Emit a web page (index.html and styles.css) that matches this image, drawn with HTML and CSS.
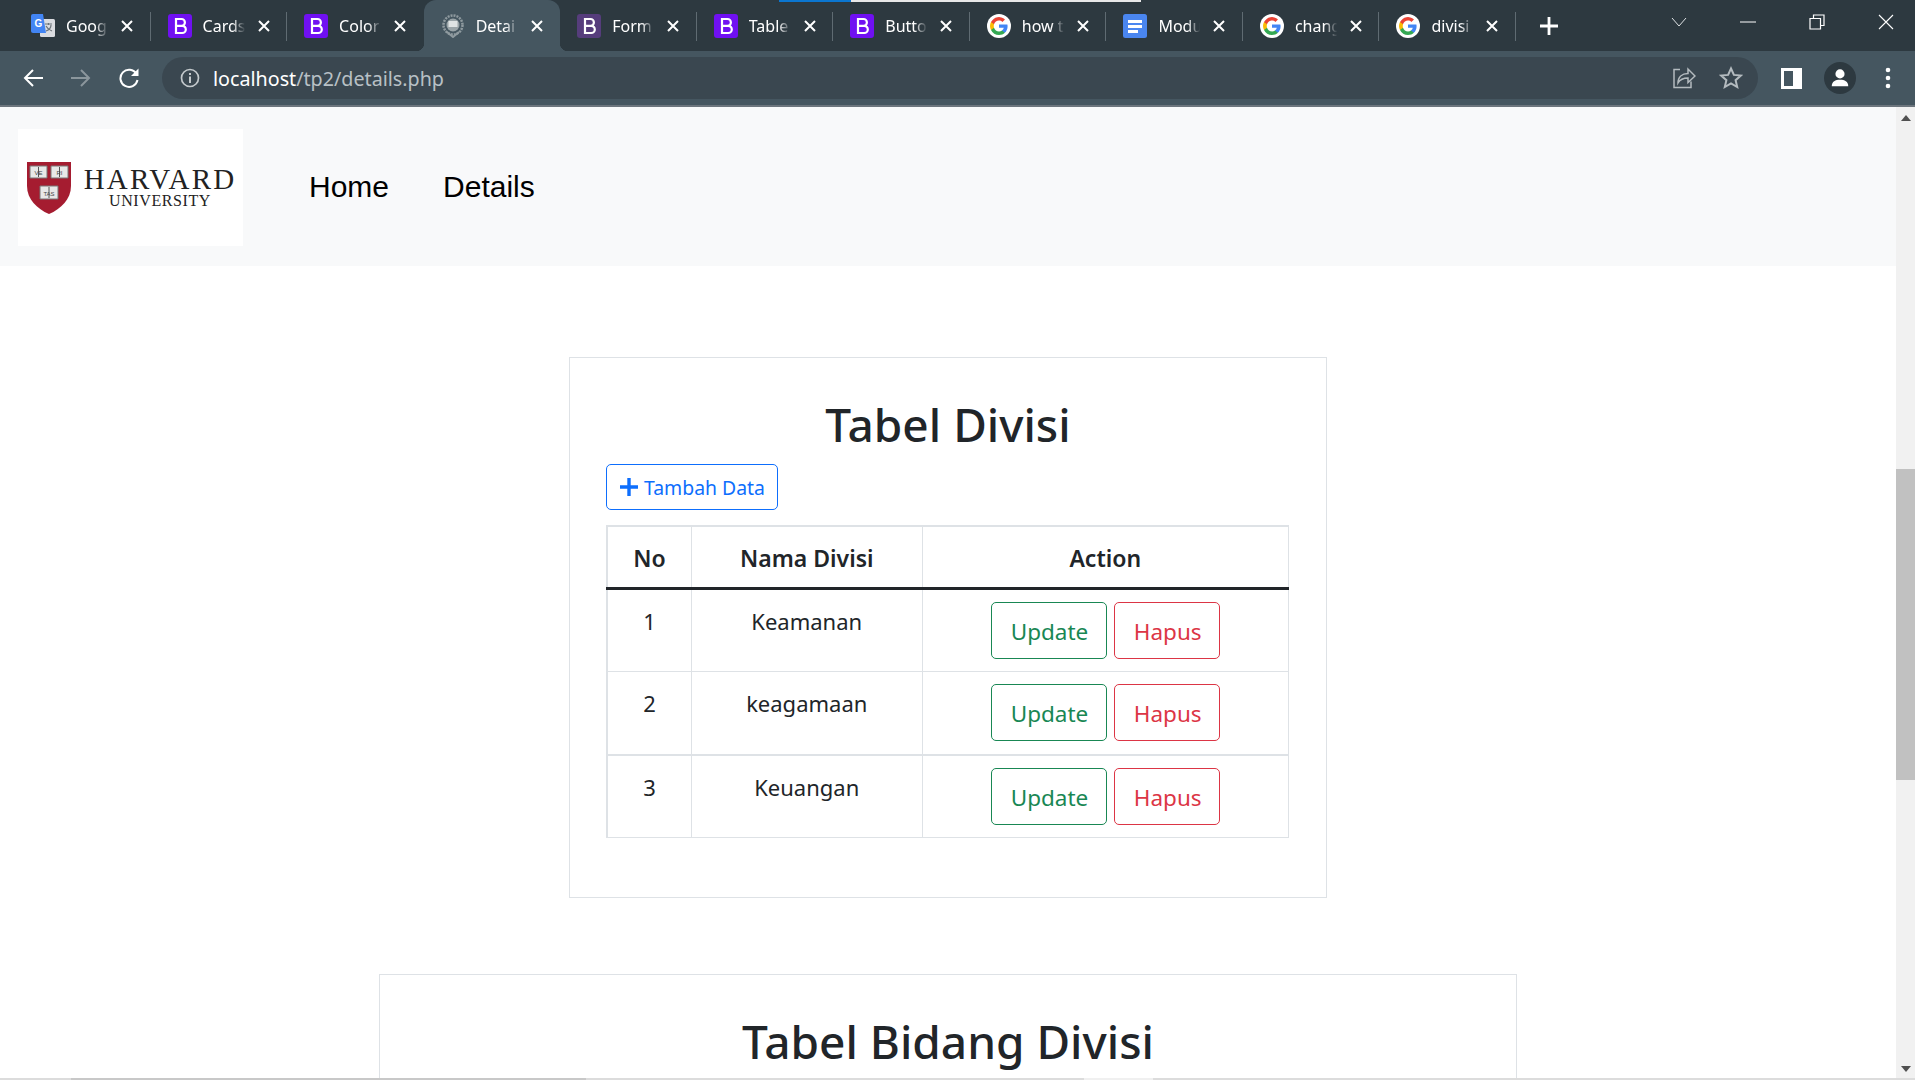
FILE: index.html
```html
<!DOCTYPE html>
<html lang="en">
<head>
    <meta charset="UTF-8">
    <meta name="viewport" content="width=device-width, initial-scale=1.0">
    <title>Details</title>
    <link rel="stylesheet" href="styles.css">
</head>
<body>
    <svg class="defs">
        <defs>
            <symbol id="fav-b" viewBox="0 0 24 24">
                <path fill="none" stroke="#fff" stroke-width="2.2" d="M8 5h5.5a3.4 3.4 0 0 1 0 6.8H8h6.2a3.6 3.6 0 0 1 0 7.2H8z"/>
            </symbol>
            <symbol id="fav-g" viewBox="0 0 24 24">
                <circle cx="12" cy="12" r="12" fill="#fff"/>
                <path fill="#4285f4" d="M20.6 12.2c0-.6-.1-1.200-.2-1.800H12v3.400h4.800a4.100 4.100 0 0 1-1.800 2.700v2.200h2.900c1.700-1.600 2.700-3.900 2.700-6.500z"/>
                <path fill="#34a853" d="M12 21c2.400 0 4.400-.8 5.900-2.200L15 16.500c-.8.500-1.800.9-3 .9-2.300 0-4.300-1.600-5-3.700H4v2.300A9 9 0 0 0 12 21z"/>
                <path fill="#fbbc05" d="M7 13.700a5.400 5.400 0 0 1 0-3.400V8H4a9 9 0 0 0 0 8z"/>
                <path fill="#ea4335" d="M12 6.600c1.300 0 2.500.5 3.400 1.300L18 5.400A9 9 0 0 0 4 8l3 2.300c.7-2.100 2.700-3.700 5-3.700z"/>
            </symbol>
            <symbol id="ic-close" viewBox="0 0 14 14">
                <path fill="none" stroke="#fff" stroke-width="2" d="M2 2l10 10M12 2L2 12"/>
            </symbol>
        </defs>
    </svg>

    <div class="browser">
        <div class="load-bar"><span></span></div>

        <div class="tabstrip">
            <div class="tab">
                <svg class="fav" viewBox="0 0 24 24">
                    <rect x="9" y="5" width="15" height="18" rx="1.500" fill="#dadce0"/>
                    <path d="M14 10h7M17.500 9v2M15 17c3-1 5-3 5-6M15 12c1 2 3 4 6 5" fill="none" stroke="#6b7278" stroke-width="1.200"/>
                    <path d="M2 0h10l3 19H2a2 2 0 0 1-2-2V2a2 2 0 0 1 2-2z" fill="#4285f4"/>
                    <text x="3.500" y="13" class="fav-letter">G</text>
                </svg>
                <span class="tab-title">Goog</span>
                <svg class="tab-close"><use href="#ic-close"/></svg>
            </div>
            <div class="tab">
                <span class="fav fav-boot"><svg><use href="#fav-b"/></svg></span>
                <span class="tab-title">Cards</span>
                <svg class="tab-close"><use href="#ic-close"/></svg>
            </div>
            <div class="tab">
                <span class="fav fav-boot"><svg><use href="#fav-b"/></svg></span>
                <span class="tab-title">Color</span>
                <svg class="tab-close"><use href="#ic-close"/></svg>
            </div>
            <div class="tab tab-active">
                <svg class="fav" viewBox="0 0 24 24">
                    <circle cx="12" cy="11" r="9.500" fill="none" stroke="#8f9a9f" stroke-width="2.500" stroke-dasharray="2 1"/>
                    <circle cx="12" cy="11" r="6.500" fill="#9aa4a8"/>
                    <rect x="7.500" y="7" width="9" height="6" fill="#dfe3e4"/>
                    <path d="M6 18l6 5 6-5" fill="none" stroke="#8f9a9f" stroke-width="2"/>
                </svg>
                <span class="tab-title">Detai</span>
                <svg class="tab-close"><use href="#ic-close"/></svg>
            </div>
            <div class="tab">
                <span class="fav fav-boot fav-boot-old"><svg><use href="#fav-b"/></svg></span>
                <span class="tab-title">Form</span>
                <svg class="tab-close"><use href="#ic-close"/></svg>
            </div>
            <div class="tab">
                <span class="fav fav-boot"><svg><use href="#fav-b"/></svg></span>
                <span class="tab-title">Table</span>
                <svg class="tab-close"><use href="#ic-close"/></svg>
            </div>
            <div class="tab">
                <span class="fav fav-boot"><svg><use href="#fav-b"/></svg></span>
                <span class="tab-title">Butto</span>
                <svg class="tab-close"><use href="#ic-close"/></svg>
            </div>
            <div class="tab">
                <svg class="fav"><use href="#fav-g"/></svg>
                <span class="tab-title">how t</span>
                <svg class="tab-close"><use href="#ic-close"/></svg>
            </div>
            <div class="tab">
                <svg class="fav" viewBox="0 0 24 24">
                    <rect width="24" height="24" rx="2.500" fill="#4a86f0"/>
                    <path d="M5 6h14v3H5zM5 11h14v3H5zM5 16h10v3H5z" fill="#fff"/>
                </svg>
                <span class="tab-title">Modu</span>
                <svg class="tab-close"><use href="#ic-close"/></svg>
            </div>
            <div class="tab">
                <svg class="fav"><use href="#fav-g"/></svg>
                <span class="tab-title">chang</span>
                <svg class="tab-close"><use href="#ic-close"/></svg>
            </div>
            <div class="tab">
                <svg class="fav"><use href="#fav-g"/></svg>
                <span class="tab-title">divisi</span>
                <svg class="tab-close"><use href="#ic-close"/></svg>
            </div>
            <svg class="new-tab" viewBox="0 0 18 18"><path fill="none" stroke="#fff" stroke-width="2.800" d="M9 0v18M0 9h18"/></svg>
            <div class="win-controls">
                <svg viewBox="0 0 16 10" class="win-chevron"><path fill="none" stroke="#dfe3e5" stroke-width="1" d="M1 1l7 8 7-8"/></svg>
                <svg viewBox="0 0 16 16" class="win-min"><path stroke="#fff" stroke-width="1" d="M0 8h16"/></svg>
                <svg viewBox="0 0 16 16" class="win-restore"><path fill="none" stroke="#fff" stroke-width="1.200" d="M1 4.500h10.500V15H1zM4.500 4.500V1H15v10.500h-3.500"/></svg>
                <svg viewBox="0 0 16 16" class="win-close"><path fill="none" stroke="#fff" stroke-width="1.100" d="M1 1l14 14M15 1L1 15"/></svg>
            </div>
        </div>

        <div class="toolbar">
            <svg class="tool-btn" viewBox="0 0 22 22"><path fill="none" stroke="#fff" stroke-width="2" d="M21 11H3M11 3l-8 8 8 8"/></svg>
            <svg class="tool-btn" viewBox="0 0 22 22"><path fill="none" stroke="#8b969c" stroke-width="2" d="M1 11h18M11 3l8 8-8 8"/></svg>
            <svg class="tool-btn" viewBox="0 0 22 22">
                <path fill="none" stroke="#fff" stroke-width="2" d="M18.500 7A8.600 8.600 0 1 0 19.500 13"/>
                <path fill="#fff" d="M20.500 1.500v7.500h-7.500z"/>
            </svg>
            <div class="omnibox">
                <svg class="omni-info" viewBox="0 0 20 20">
                    <circle cx="10" cy="10" r="8.500" fill="none" stroke="#c3c9cc" stroke-width="1.700"/>
                    <path d="M9 5h2v2H9zM9 8.500h2V15H9z" fill="#c3c9cc"/>
                </svg>
                <span class="url"><b>localhost</b>/tp2/details.php</span>
                <svg class="omni-share" viewBox="0 0 24 24">
                    <path fill="none" stroke="#b4bbbf" stroke-width="1.500" d="M8 3.500H2v18h17v-6"/>
                    <path fill="none" stroke="#b4bbbf" stroke-width="1.500" d="M6 17c0-6 4-9.500 10-9.500V3l7 7-7 6.500v-4.500c-5 0-8 1.500-10 5z"/>
                </svg>
                <svg class="omni-star" viewBox="0 0 24 24">
                    <path fill="none" stroke="#b4bbbf" stroke-width="2" d="M12 2.500l2.900 6.400 7 .7-5.300 4.600 1.600 6.800L12 17.400 5.800 21l1.600-6.800L2.100 9.600l7-.7z"/>
                </svg>
            </div>
            <svg class="side-panel" viewBox="0 0 21 21">
                <path fill="#fff" d="M0 0h21v21H0z"/>
                <path fill="#455660" d="M3 3h9v15H3z"/>
            </svg>
            <span class="avatar">
                <svg viewBox="0 0 24 24"><circle cx="12" cy="7.500" r="5" fill="#fff"/><path d="M3 21c0-5 4-7 9-7s9 2 9 7z" fill="#fff"/></svg>
            </span>
            <svg class="tool-dots" viewBox="0 0 6 24"><circle cx="3" cy="4" r="2.300" fill="#fff"/><circle cx="3" cy="12" r="2.300" fill="#fff"/><circle cx="3" cy="20" r="2.300" fill="#fff"/></svg>
        </div>

        <div class="viewport">
            <div class="page">
                <nav class="navbar">
                    <div class="logo">
                        <svg class="shield" viewBox="0 0 44 52">
                            <path fill="#a51c30" d="M0 0h44v24c0 13-10 23-22 28C10 47 0 37 0 24z"/>
                            <path fill="#e8e8e8" stroke="#777" d="M3 4h17v12H3zM24 4h17v12H24zM13 24h18v13H13z"/>
                            <path stroke="#555" stroke-width="1" d="M11.500 5v10M32.500 5v10M22 25v11"/>
                            <text class="shield-text" x="11.500" y="12.500">VE</text>
                            <text class="shield-text" x="32.500" y="12.500">RI</text>
                            <text class="shield-text" x="22" y="33.500">TAS</text>
                        </svg>
                        <div class="logo-text">
                            <span class="logo-name">HARVARD</span>
                            <span class="logo-sub">UNIVERSITY</span>
                        </div>
                    </div>
                    <a class="nav-link" href="#">Home</a>
                    <a class="nav-link" href="#">Details</a>
                </nav>

                <section class="card card-small">
                    <h1>Tabel Divisi</h1>
                    <a class="btn btn-add" href="#">
                        <svg viewBox="0 0 18 18"><path fill="none" stroke="#0d6efd" stroke-width="3.400" d="M9 0v18M0 9h18"/></svg>
                        Tambah Data
                    </a>
                    <table class="data-table">
                        <colgroup>
                            <col class="col-no">
                            <col class="col-name">
                            <col>
                        </colgroup>
                        <thead>
                            <tr>
                                <th>No</th>
                                <th>Nama Divisi</th>
                                <th>Action</th>
                            </tr>
                        </thead>
                        <tbody>
                            <tr>
                                <td>1</td>
                                <td>Keamanan</td>
                                <td><a class="btn btn-lg btn-update" href="#">Update</a><a class="btn btn-lg btn-hapus" href="#">Hapus</a></td>
                            </tr>
                            <tr>
                                <td>2</td>
                                <td>keagamaan</td>
                                <td><a class="btn btn-lg btn-update" href="#">Update</a><a class="btn btn-lg btn-hapus" href="#">Hapus</a></td>
                            </tr>
                            <tr>
                                <td>3</td>
                                <td>Keuangan</td>
                                <td><a class="btn btn-lg btn-update" href="#">Update</a><a class="btn btn-lg btn-hapus" href="#">Hapus</a></td>
                            </tr>
                        </tbody>
                    </table>
                </section>

                <section class="card card-wide">
                    <h1>Tabel Bidang Divisi</h1>
                </section>
            </div>

            <div class="scrollbar">
                <span class="arrow-up"></span>
                <div class="scroll-track"><span class="scroll-thumb"></span></div>
                <span class="arrow-down"></span>
            </div>

            <div class="hscroll"></div>
        </div>
    </div>
</body>
</html>
```

FILE: styles.css
```css
html, body {
    margin: 0;
    padding: 0;
    height: 100%;
    overflow: hidden;
}

body {
    font-family: "Noto Sans", "Open Sans", sans-serif;
    color: #212529;
    background-color: #fff;
}

.defs {
    display: none;
}

.browser {
    position: relative;
    display: flex;
    flex-direction: column;
    height: 1080px;
}

.load-bar {
    position: absolute;
    top: 0;
    left: 779px;
    width: 362px;
    height: 2px;
    background-color: #e8e8e8;
    z-index: 2;
}

.load-bar span {
    display: block;
    width: 72px;
    height: 100%;
    background-color: #0b76d0;
}

/* tab strip */
.tabstrip {
    display: flex;
    align-items: stretch;
    height: 51px;
    padding-left: 14px;
    background-color: #2d3940;
    flex-shrink: 0;
}

.tab {
    position: relative;
    display: flex;
    align-items: center;
    box-sizing: border-box;
    width: 136.55px;
    padding-left: 17px;
    flex-shrink: 0;
}

.tab::after {
    content: "";
    position: absolute;
    right: 0;
    top: 12px;
    width: 1px;
    height: 29px;
    background-color: #5f6b72;
}

.tab-active {
    background-color: #455660;
    border-radius: 12px 12px 0 0;
}

.tab:nth-child(3)::after {
    background-color: transparent;
}

/* flared bottom corners of the active tab */
.tab-active::before,
.tab-active::after {
    content: "";
    position: absolute;
    top: auto;
    bottom: 0;
    width: 8px;
    height: 8px;
    background-color: transparent;
}

.tab-active::before {
    left: -8px;
    background-image: radial-gradient(circle at 0 0, transparent 8px, #455660 8.5px);
}

.tab-active::after {
    right: -8px;
    background-image: radial-gradient(circle at 100% 0, transparent 8px, #455660 8.5px);
}

.fav {
    display: block;
    width: 24px;
    height: 24px;
    flex-shrink: 0;
}

.fav-boot {
    background-color: #7010f2;
    border-radius: 3px;
}

.fav-boot-old {
    background-color: #563d7c;
}

.fav-boot svg {
    display: block;
    width: 24px;
    height: 24px;
}

.fav-letter {
    font-family: "Liberation Sans", sans-serif;
    font-size: 10px;
    font-weight: 700;
    fill: #fff;
}

.tab-title {
    width: 47px;
    margin-left: 11px;
    overflow: hidden;
    white-space: nowrap;
    font-size: 16px;
    color: #fff;
    -webkit-mask-image: linear-gradient(to right, #000 62%, transparent 90%);
    mask-image: linear-gradient(to right, #000 62%, transparent 90%);
}

.tab-close {
    width: 14px;
    height: 14px;
    margin-left: 7px;
    flex-shrink: 0;
}

.new-tab {
    width: 18px;
    height: 18px;
    margin-left: 24px;
    align-self: center;
}

.win-controls {
    display: flex;
    align-items: center;
    margin-left: auto;
    padding-right: 21px;
    height: 44px;
}

.win-chevron {
    width: 16px;
    height: 10px;
    margin-right: 53px;
}

.win-min,
.win-restore,
.win-close {
    width: 16px;
    height: 16px;
}

.win-min {
    margin-right: 53px;
}

.win-restore {
    margin-right: 53px;
}

/* address bar */
.toolbar {
    display: flex;
    align-items: center;
    height: 56px;
    box-sizing: border-box;
    padding-left: 22px;
    background-color: #455660;
    border-bottom: 2px solid #6c757d;
    flex-shrink: 0;
}

.tool-btn {
    width: 22px;
    height: 22px;
    margin-right: 26px;
    flex-shrink: 0;
}

.omnibox {
    display: flex;
    align-items: center;
    box-sizing: border-box;
    width: 1596px;
    height: 42px;
    margin-left: -4px;
    padding-left: 18px;
    background-color: #3a4750;
    border-radius: 21px;
    flex-shrink: 0;
}

.omni-info {
    width: 20px;
    height: 20px;
    flex-shrink: 0;
}

.url {
    margin-left: 13px;
    font-size: 19.7px;
    color: #b8c0c5;
}

.url b {
    font-weight: 400;
    color: #fff;
}

.omni-share {
    width: 24px;
    height: 24px;
    margin-left: auto;
}

.omni-star {
    width: 24px;
    height: 24px;
    margin-left: 23px;
    margin-right: 15px;
}

.side-panel {
    width: 21px;
    height: 21px;
    margin-left: 23px;
    flex-shrink: 0;
}

.avatar {
    display: flex;
    align-items: center;
    justify-content: center;
    width: 32px;
    height: 32px;
    margin-left: 22px;
    background-color: #2d3940;
    border-radius: 50%;
    flex-shrink: 0;
}

.avatar svg {
    width: 22px;
    height: 22px;
}

.tool-dots {
    width: 6px;
    height: 24px;
    margin-left: 29px;
    flex-shrink: 0;
}

/* page area */
.viewport {
    position: relative;
    display: flex;
    flex: 1;
    min-height: 0;
}

.page {
    flex: 1;
    min-width: 0;
    overflow: hidden;
}

.navbar {
    display: flex;
    align-items: center;
    height: 159px;
    box-sizing: border-box;
    padding: 22px 0 20px 18px;
    background-color: #f8f9fa;
}

.logo {
    display: flex;
    align-items: center;
    box-sizing: border-box;
    width: 225px;
    height: 117px;
    padding-left: 9px;
    background-color: #fff;
    margin-right: 66px;
}

.shield {
    width: 44px;
    height: 52px;
    flex-shrink: 0;
}

.shield-text {
    font-family: "Liberation Sans", sans-serif;
    font-size: 6px;
    fill: #444;
    text-anchor: middle;
}

.logo-text {
    display: flex;
    flex-direction: column;
    align-items: center;
    width: 152px;
    margin-left: 13px;
    font-family: "Liberation Serif", serif;
    color: #222;
}

.logo-name {
    font-size: 29px;
    line-height: 26px;
    letter-spacing: 2.2px;
    white-space: nowrap;
}

.logo-sub {
    font-size: 16px;
    line-height: 18px;
    letter-spacing: 0.6px;
}

.nav-link {
    margin-right: 54px;
    margin-bottom: 2px;
    font-family: "Liberation Sans", Arial, sans-serif;
    font-size: 30px;
    color: #000;
    text-decoration: none;
}

.card {
    box-sizing: border-box;
    margin: 0 auto;
    background-color: #fff;
    border: 1px solid #dee2e6;
}

.card-small {
    width: 758px;
    height: 541px;
    margin-top: 91px;
    padding: 0 36px;
}

.card-wide {
    width: 1138px;
    margin-top: 76px;
    height: 200px;
}

h1 {
    margin: 0;
    padding-top: 35px;
    font-size: 46px;
    font-weight: 500;
    line-height: 62px;
    text-align: center;
}

.btn {
    display: inline-block;
    box-sizing: border-box;
    background-color: #fff;
    border: 1px solid;
    border-radius: 5px;
    text-decoration: none;
    text-align: center;
}

.btn-add {
    display: flex;
    align-items: center;
    gap: 6px;
    width: 172px;
    height: 46px;
    margin-top: 9px;
    padding-left: 13px;
    font-size: 19.4px;
    color: #0d6efd;
    border-color: #0d6efd;
}

.btn-add svg {
    width: 18px;
    height: 18px;
    flex-shrink: 0;
}

.data-table {
    width: 683px;
    margin-top: 15px;
    border-collapse: collapse;
    table-layout: fixed;
    border: 2px solid #dee2e6;
    border-bottom-width: 1px;
    border-right-width: 1px;
    font-size: 22px;
}

.col-no {
    width: 84.5px;
}

.col-name {
    width: 230.5px;
}

.data-table th,
.data-table td {
    border: 1px solid #dee2e6;
    text-align: center;
    vertical-align: top;
    box-sizing: border-box;
    padding: 0;
}

.data-table th {
    height: 60px;
    padding-top: 2px;
    font-size: 23px;
    font-weight: 600;
    line-height: 58px;
    border-bottom: 3px solid #212529;
}

.data-table td {
    height: 83px;
    padding-top: 12px;
    line-height: 38px;
}

.data-table tbody tr:nth-child(2) td {
    border-bottom-width: 2px;
}

.btn-lg {
    height: 57px;
    padding: 0 19px;
    font-size: 22.5px;
    line-height: 57px;
    vertical-align: top;
}

.btn-update {
    width: 116px;
    margin-right: 7px;
    color: #198754;
    border-color: #198754;
}

.btn-hapus {
    width: 106px;
    color: #dc3545;
    border-color: #dc3545;
}

/* scrollbars */
.scrollbar {
    display: flex;
    flex-direction: column;
    align-items: center;
    width: 19px;
    background-color: #f1f1f1;
    flex-shrink: 0;
}

.arrow-up,
.arrow-down {
    width: 0;
    height: 0;
    margin: 8px 0 10px;
    border-left: 5.500px solid transparent;
    border-right: 5.500px solid transparent;
}

.arrow-up {
    border-bottom: 6px solid #505050;
}

.arrow-down {
    margin: 10px 0 8px;
    border-top: 6px solid #505050;
}

.scroll-track {
    flex: 1;
    width: 100%;
    padding-top: 338px;
    box-sizing: border-box;
}

.scroll-thumb {
    display: block;
    height: 311px;
    background-color: #c1c1c1;
}

.hscroll {
    position: absolute;
    left: 0;
    right: 0;
    bottom: 0;
    height: 2px;
    background-image: linear-gradient(to right,
        #dcdcdc 71px, #c8c8c8 71px, #c8c8c8 586px,
        #dcdcdc 586px, #dcdcdc 1084px, #f0f0f0 1084px,
        #f0f0f0 1153px, #dcdcdc 1153px);
}
```
